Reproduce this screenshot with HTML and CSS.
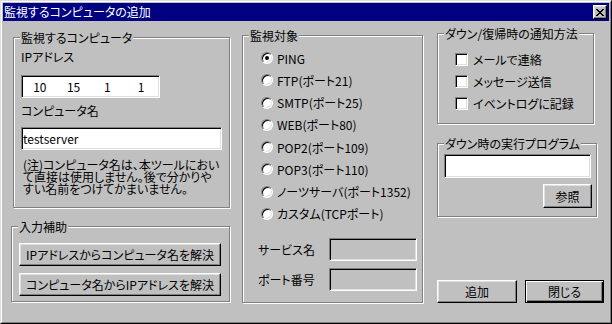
FILE: index.html
```html
<!DOCTYPE html>
<html lang="ja">
<head>
<meta charset="utf-8">
<title>監視するコンピュータの追加</title>
<link rel="stylesheet" href="styles.css">
</head>
<body>
<div class="window">
  <div class="frame">
    <div class="titlebar">
      <span class="title">監視するコンピュータの追加</span>
      <span class="close"><svg width="8" height="7" viewBox="0 0 8 7" shape-rendering="crispEdges"><path fill="#000" d="M0 0h2v1h-2zM6 0h2v1h-2zM1 1h2v1h-2zM5 1h2v1h-2zM2 2h4v1h-4zM3 3h2v1h-2zM2 4h4v1h-4zM1 5h2v1h-2zM5 5h2v1h-2zM0 6h2v1h-2zM6 6h2v1h-2z"/></svg></span>
    </div>
    <div class="content">
      <div class="col col1">
        <div class="group g-computer">
          <span class="group-title">監視するコンピュータ</span>
          <div class="label">IPアドレス</div>
          <div class="field ip"><span>10</span><span>15</span><span>1</span><span>1</span></div>
          <div class="label label-name">コンピュータ名</div>
          <div class="field text">testserver</div>
          <p class="note">(注)コンピュータ名は、本ツールにおい<br>て直接は使用しません。後で分かりや<br>すい名前をつけてかまいません。</p>
        </div>
        <div class="group g-assist">
          <span class="group-title">入力補助</span>
          <button class="btn wide">IPアドレスからコンピュータ名を解決</button>
          <button class="btn wide">コンピュータ名からIPアドレスを解決</button>
        </div>
      </div>
      <div class="col col2">
        <div class="group g-target">
          <span class="group-title">監視対象</span>
          <div class="opts">
            <div class="opt"><span class="radio checked"></span><span>PING</span></div>
            <div class="opt"><span class="radio"></span><span>FTP(ポート21)</span></div>
            <div class="opt"><span class="radio"></span><span>SMTP(ポート25)</span></div>
            <div class="opt"><span class="radio"></span><span>WEB(ポート80)</span></div>
            <div class="opt"><span class="radio"></span><span>POP2(ポート109)</span></div>
            <div class="opt"><span class="radio"></span><span>POP3(ポート110)</span></div>
            <div class="opt"><span class="radio"></span><span>ノーツサーバ(ポート1352)</span></div>
            <div class="opt"><span class="radio"></span><span>カスタム(TCPポート)</span></div>
          </div>
          <div class="svc-row first"><span class="svc-label">サービス名</span><span class="field disabled svc"></span></div>
          <div class="svc-row"><span class="svc-label">ポート番号</span><span class="field disabled svc"></span></div>
        </div>
      </div>
      <div class="col col3">
        <div class="group g-notify">
          <span class="group-title">ダウン/復帰時の通知方法</span>
          <div class="chk-row"><span class="check"></span><span>メールで連絡</span></div>
          <div class="chk-row"><span class="check"></span><span>メッセージ送信</span></div>
          <div class="chk-row"><span class="check"></span><span>イベントログに記録</span></div>
        </div>
        <div class="group g-program">
          <span class="group-title">ダウン時の実行プログラム</span>
          <div class="field prog"></div>
          <button class="btn browse">参照</button>
        </div>
        <div class="actions">
          <button class="btn act">追加</button>
          <button class="btn act default">閉じる</button>
        </div>
      </div>
    </div>
  </div>
</div>
</body>
</html>
```
FILE: styles.css
```css
* { box-sizing: border-box; }
html, body { margin: 0; padding: 0; }
body {
  width: 612px;
  height: 324px;
  overflow: hidden;
  font-family: "Noto Sans CJK JP", "Noto Sans", sans-serif;
  font-size: 12px;
  font-weight: 400;
  color: #000;
  font-feature-settings: "palt";
}
.window {
  width: 612px;
  height: 324px;
  border: 1px solid;
  border-color: #dfdfdf #000 #000 #dfdfdf;
  background: #c0c0c0;
}
.frame {
  height: 100%;
  border: 1px solid;
  border-color: #fff #808080 #808080 #fff;
  padding: 1px;
  display: flex;
  flex-direction: column;
}
.titlebar {
  flex: none;
  height: 18px;
  background: #000080;
  color: #fff;
  display: flex;
  align-items: center;
  justify-content: space-between;
  padding: 0 2px 0 1px;
  line-height: 18px;
}
.close {
  width: 14px;
  height: 14px;
  background: #c0c0c0;
  border: 1px solid;
  border-color: #fff #000 #000 #fff;
  box-shadow: inset -1px -1px #808080, inset 1px 1px #dfdfdf;
  display: flex;
  align-items: center;
  justify-content: center;
}
.close svg { display: block; }
.content {
  flex: 1;
  display: flex;
  align-items: flex-start;
  padding-left: 10px;
}
.col { display: flex; flex-direction: column; }
.col1 { width: 217px; }
.col2 { width: 181px; margin-left: 12px; }
.col3 { width: 167px; margin-left: 14px; }

.group {
  position: relative;
  border: 1px solid #808080;
  box-shadow: inset 1px 1px #fff, 1px 1px #fff;
}
.group-title {
  position: absolute;
  top: -7px;
  left: 6px;
  padding: 0 1px;
  background: #c0c0c0;
  line-height: 13px;
  white-space: nowrap;
}

.field {
  display: block;
  border: 1px solid;
  border-color: #808080 #fff #fff #808080;
  box-shadow: inset 1px 1px #000, inset -1px -1px #dfdfdf;
  background: #fff;
  height: 23px;
}
.field.disabled { background: #c0c0c0; }

.btn {
  display: flex;
  align-items: center;
  justify-content: center;
  height: 23px;
  padding: 0;
  margin: 0;
  font: inherit;
  color: #000;
  background: #c0c0c0;
  border: 1px solid;
  border-color: #fff #000 #000 #fff;
  box-shadow: inset -1px -1px #808080, inset 1px 1px #dfdfdf;
}
.btn.default {
  border-color: #000;
  box-shadow: inset 1px 1px #fff, inset -1px -1px #000, inset -2px -2px #808080;
}

/* Column 1 */
.g-computer {
  margin-top: 16px;
  height: 171px;
  padding: 12px 7px 0 7px;
}
.label { line-height: 14px; height: 14px; }
.label-name { margin-top: 6px; }
.ip {
  margin-top: 11px;
  width: 139px;
  display: flex;
  align-items: center;
  padding: 0 1px;
}
.ip span { flex: 1; text-align: center; }
.text {
  margin-top: 9px;
  width: 201px;
  line-height: 21px;
  padding-left: 1px;
}
.note {
  margin: 9px 0 0 2px;
  line-height: 12px;
  white-space: nowrap;
}
.g-assist {
  margin-top: 18px;
  margin-left: -2px;
  width: 219px;
  height: 76px;
  padding: 16px 0 0 7px;
  display: flex;
  flex-direction: column;
  gap: 7px;
}
.btn.wide { width: 202px; }

/* Column 2 */
.g-target {
  margin-top: 14px;
  height: 268px;
  padding-top: 11px;
}
.opts { padding-left: 18px; }
.opt {
  height: 22.25px;
  display: flex;
  align-items: center;
  gap: 4px;
  white-space: nowrap;
}
.radio {
  position: relative;
  flex: none;
  width: 12px;
  height: 12px;
  border-radius: 50%;
  border: 1px solid;
  border-color: #808080 #fff #fff #808080;
  box-shadow: inset 1px 1px #000, inset -1px -1px #dfdfdf;
  background: #fff;
}
.radio.checked::after {
  content: "";
  position: absolute;
  left: 3px;
  top: 3px;
  width: 4px;
  height: 4px;
  border-radius: 50%;
  background: #000;
}
.svc-row {
  display: flex;
  align-items: center;
  padding-left: 15px;
  margin-top: 7px;
}
.svc-row.first { margin-top: 13px; }
.svc-label { width: 71px; white-space: nowrap; }
.field.svc { width: 88px; }

/* Column 3 */
.g-notify {
  margin-top: 12px;
  width: 157px;
  height: 91px;
  padding: 14px 0 0 17px;
}
.chk-row {
  height: 22px;
  display: flex;
  align-items: center;
  gap: 5px;
  white-space: nowrap;
}
.check {
  flex: none;
  width: 13px;
  height: 13px;
  border: 1px solid;
  border-color: #808080 #fff #fff #808080;
  box-shadow: inset 1px 1px #000, inset -1px -1px #dfdfdf;
  background: #fff;
}
.g-program {
  margin-top: 19px;
  width: 160px;
  height: 74px;
  padding: 10px 0 0 6px;
}
.prog { width: 147px; height: 24px; }
.btn.browse {
  margin: 6px 0 0 99px;
  width: 49px;
  height: 24px;
}
.actions {
  margin-top: 63px;
  display: flex;
  gap: 8px;
}
.btn.act { width: 80px; }
.btn.act.default { width: 79px; }
```
